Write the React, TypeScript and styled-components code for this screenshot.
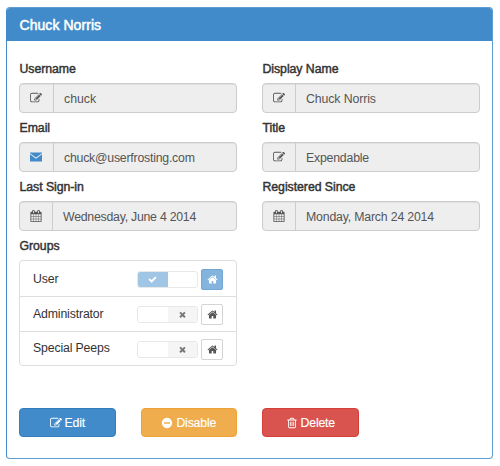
import React from "react";
import styled, { createGlobalStyle, css } from "styled-components";

const Global = createGlobalStyle`
  * { box-sizing: border-box; }
  body {
    margin: 0;
    background: #fff;
    color: #333;
    font-family: "Liberation Sans", Arial, sans-serif;
    font-size: 12.3px;
    line-height: 17px;
  }
`;

const icons = {
  edit: "M888 1184l116-116-152-152-116 116v56h96v96h56zm440-720q-16-16-33 1l-350 350q-17 17-1 33t33-1l350-350q17-17 1-33zm80 594v190q0 119-84.5 203.5t-203.5 84.5h-832q-119 0-203.5-84.5t-84.5-203.5v-832q0-119 84.5-203.5t203.5-84.5h832q63 0 117 25 15 7 18 23 3 17-9 29l-49 49q-14 14-32 8-23-6-45-6h-832q-66 0-113 47t-47 113v832q0 66 47 113t113 47h832q66 0 113-47t47-113v-126q0-13 9-22l64-64q15-15 35-7t20 29zm-96-738l288 288-672 672h-288v-288zm444 132l-92 92-288-288 92-92q28-28 68-28t68 28l152 152q28 28 28 68t-28 68z",
  calendar:
    "M192 1664h288v-288h-288v288zm352 0h320v-288h-320v288zm-352-352h288v-320h-288v320zm352 0h320v-320h-320v320zm-352-384h288v-288h-288v288zm736 736h320v-288h-320v288zm-384-736h320v-288h-320v288zm768 736h288v-288h-288v288zm-384-352h320v-320h-320v320zm-352-864v-288q0-13-9.5-22.5t-22.5-9.5h-64q-13 0-22.5 9.5t-9.5 22.5v288q0 13 9.5 22.5t22.5 9.5h64q13 0 22.5-9.5t9.5-22.5zm736 864h288v-320h-288v320zm-384-384h320v-288h-320v288zm384 0h288v-288h-288v288zm32-480v-288q0-13-9.5-22.5t-22.5-9.5h-64q-13 0-22.5 9.5t-9.5 22.5v288q0 13 9.5 22.5t22.5 9.5h64q13 0 22.5-9.5t9.5-22.5zm384-64v1280q0 52-38 90t-90 38h-1408q-52 0-90-38t-38-90v-1280q0-52 38-90t90-38h128v-96q0-66 47-113t113-47h64q66 0 113 47t47 113v96h384v-96q0-66 47-113t113-47h64q66 0 113 47t47 113v96h128q52 0 90 38t38 90z",
  mail: "M0 240H1792V320L896 960L0 320ZM0 500L896 1140L1792 500V1580H0Z",
  home: "M1472 992v480q0 26-19 45t-45 19h-384v-384h-256v384h-384q-26 0-45-19t-19-45v-480q0-1 .5-3t.5-3l575-474 575 474q1 2 1 6zm223-69l-62 74q-8 9-21 11h-3q-13 0-21-7l-692-577-692 577q-12 8-24 7-13-2-21-11l-62-74q-8-10-7-23.5t11-21.5l719-599q32-26 76-26t76 26l244 204v-195q0-14 9-23t23-9h192q14 0 23 9t9 23v408l219 182q10 8 11 21.5t-7 23.5z",
  check:
    "M1671 566q0 40-28 68l-724 724-136 136q-28 28-68 28t-68-28l-136-136-362-362q-28-28-28-68t28-68l136-136q28-28 68-28t68 28l294 295 656-657q28-28 68-28t68 28l136 136q28 28 28 68z",
  times:
    "M1490 1322q0 40-28 68l-136 136q-28 28-68 28t-68-28l-294-294-294 294q-28 28-68 28t-68-28l-136-136q-28-28-28-68t28-68l294-294-294-294q-28-28-28-68t28-68l136-136q28-28 68-28t68 28l294 294 294-294q28-28 68-28t68 28l136 136q28 28 28 68t-28 68l-294 294 294 294q28 28 28 68z",
  minus:
    "M1344 960v-128q0-26-19-45t-45-19h-768q-26 0-45 19t-19 45v128q0 26 19 45t45 19h768q26 0 45-19t19-45zm320-64q0 209-103 385.5t-279.5 279.5-385.5 103-385.5-103-279.5-279.5-103-385.5 103-385.5 279.5-279.5 385.5-103 385.5 103 279.5 279.5 103 385.5z",
  trash:
    "M704 736v576q0 14-9 23t-23 9h-64q-14 0-23-9t-9-23v-576q0-14 9-23t23-9h64q14 0 23 9t9 23zm256 0v576q0 14-9 23t-23 9h-64q-14 0-23-9t-9-23v-576q0-14 9-23t23-9h64q14 0 23 9t9 23zm256 0v576q0 14-9 23t-23 9h-64q-14 0-23-9t-9-23v-576q0-14 9-23t23-9h64q14 0 23 9t9 23zm128 724v-948h-896v948q0 22 7 40.5t14.5 27 10.5 8.5h832q3 0 10.5-8.5t14.5-27 7-40.5zm-672-1076h448l-48-117q-7-9-17-11h-317q-10 2-17 11zm928 32v64q0 14-9 23t-23 9h-96v948q0 83-47 143.5t-113 60.5h-832q-66 0-113-58.5t-47-141.5v-952h-96q-14 0-23-9t-9-23v-64q0-14 9-23t23-9h309l70-167q15-37 54-63t79-26h320q40 0 79 26t54 63l70 167h309q14 0 23 9t9 23z",
};
type IconName = keyof typeof icons;

const Svg = styled.svg<{ $size: number }>`
  width: ${(p) => p.$size}px;
  height: ${(p) => p.$size}px;
  flex: none;
  fill: currentColor;
`;

const Icon = ({ name, size }: { name: IconName; size: number }) => (
  <Svg $size={size} viewBox="0 0 1792 1792" aria-hidden="true">
    <path d={icons[name]} />
  </Svg>
);

const Panel = styled.section`
  width: 487px;
  height: 452px;
  margin: 7px 0 0 6px;
  border: 1px solid #5c9dd3;
  border-left-color: #428bca;
  border-radius: 4px;
  overflow: hidden;
`;

const Heading = styled.h1`
  height: 33px;
  margin: 0;
  padding: 0 12.5px;
  background: #428bca;
  color: #fff;
  font-size: 14px;
  font-weight: 400;
  line-height: 34px;
  letter-spacing: 0.06px;
  -webkit-text-stroke: 0.5px currentColor;
`;

const Body = styled.div`
  padding: 19px 13px 0 12px;
`;

const Fields = styled.div`
  display: grid;
  grid-template-columns: 218px 217.5px;
  column-gap: 25px;
`;

const Field = styled.div`
  height: 59px;
`;

const Label = styled.div`
  height: 23px;
  padding: 1px 0 0 0.5px;
  line-height: 17px;
  font-size: 12.3px;
  letter-spacing: -0.05px;
  -webkit-text-stroke: 0.45px currentColor;
`;

const InputGroup = styled.div`
  display: flex;
  height: 30px;
  border: 1px solid #ccc;
  border-radius: 4px;
  background: #eee;
  color: #555;
  box-shadow: inset 0 1px 1px rgba(0, 0, 0, 0.06);
`;

const Addon = styled.div<{ $narrow?: boolean; $blue?: boolean }>`
  display: flex;
  align-items: center;
  justify-content: center;
  width: ${(p) => (p.$narrow ? 33 : 34)}px;
  padding-right: ${(p) => (p.$narrow ? 0 : 1)}px;
  border-right: 1px solid #ccc;
  color: ${(p) => (p.$blue ? "#428bca" : "#555")};
`;

const Value = styled.div<{ $spacing: number }>`
  padding-left: 10px;
  line-height: 30px;
  letter-spacing: ${(p) => p.$spacing}px;
  white-space: nowrap;
`;

const GroupList = styled.div`
  width: 218px;
  border: 1px solid #ddd;
  border-radius: 4px;
`;

const GroupRow = styled.div`
  display: flex;
  align-items: center;
  height: 35px;
  padding: 2px 13px 0;
  & + & {
    border-top: 1px solid #ddd;
    padding-top: 1px;
  }
  &:last-child {
    height: 34px;
  }
`;

const GroupName = styled.span`
  flex: 1;
  padding-bottom: 1px;
  letter-spacing: -0.15px;
`;

const Switch = styled.div`
  display: flex;
  width: 61px;
  height: 17px;
  margin-right: 3px;
  border: 1px solid #e8e8e8;
  border-radius: 3px;
  overflow: hidden;
`;

const SwitchHalf = styled.div<{ $tone?: "on" | "off" }>`
  display: flex;
  flex: 1;
  align-items: center;
  justify-content: center;
  ${(p) => p.$tone === "on" && css`background: #a1c5e5; color: #fff;`}
  ${(p) => p.$tone === "off" && css`background: #f5f5f5; color: #777;`}
`;

const HomeButton = styled.button<{ $active: boolean }>`
  display: flex;
  align-items: center;
  justify-content: center;
  width: 22px;
  height: 21px;
  padding: 0;
  border: 1px solid ${(p) => (p.$active ? "#72a7d5" : "#d4d4d4")};
  border-radius: 2px;
  background: ${(p) => (p.$active ? "#84b3dd" : "#fff")};
  color: ${(p) => (p.$active ? "#fff" : "#555")};
`;

const Actions = styled.div`
  display: flex;
  gap: 25px;
  margin-top: 42px;
`;

const Action = styled.button<{ $bg: string; $border: string }>`
  display: flex;
  align-items: center;
  justify-content: center;
  gap: 3px;
  width: 96.5px;
  height: 29px;
  padding: 1px 0 0;
  border: 1px solid ${(p) => p.$border};
  border-radius: 4px;
  background: ${(p) => p.$bg};
  color: #fff;
  font: 12.3px/17px "Liberation Sans", Arial, sans-serif;
  letter-spacing: -0.2px;
  -webkit-text-stroke: 0.15px currentColor;
`;

const fields: { label: string; value: string; icon: IconName; spacing: number }[] = [
  { label: "Username", value: "chuck", icon: "edit", spacing: 0 },
  { label: "Display Name", value: "Chuck Norris", icon: "edit", spacing: -0.1 },
  { label: "Email", value: "chuck@userfrosting.com", icon: "mail", spacing: -0.22 },
  { label: "Title", value: "Expendable", icon: "edit", spacing: -0.2 },
  { label: "Last Sign-in", value: "Wednesday, June 4 2014", icon: "calendar", spacing: -0.24 },
  { label: "Registered Since", value: "Monday, March 24 2014", icon: "calendar", spacing: -0.18 },
];

const groups = [
  { name: "User", member: true },
  { name: "Administrator", member: false },
  { name: "Special Peeps", member: false },
];

export default function App() {
  return (
    <>
      <Global />
      <Panel>
        <Heading>Chuck Norris</Heading>
        <Body>
          <Fields>
            {fields.map((f, i) => (
              <Field key={f.label}>
                <Label>{f.label}</Label>
                <InputGroup>
                  <Addon $narrow={f.icon === "calendar" || i % 2 === 1} $blue={f.icon === "mail"}>
                    <Icon name={f.icon} size={12} />
                  </Addon>
                  <Value $spacing={f.spacing}>{f.value}</Value>
                </InputGroup>
              </Field>
            ))}
          </Fields>
          <Label>Groups</Label>
          <GroupList>
            {groups.map((g) => (
              <GroupRow key={g.name}>
                <GroupName>{g.name}</GroupName>
                <Switch>
                  <SwitchHalf $tone={g.member ? "on" : undefined}>
                    {g.member && <Icon name="check" size={9} />}
                  </SwitchHalf>
                  <SwitchHalf $tone={g.member ? undefined : "off"}>
                    {!g.member && <Icon name="times" size={9} />}
                  </SwitchHalf>
                </Switch>
                <HomeButton $active={g.member} aria-label="Primary group">
                  <Icon name="home" size={11} />
                </HomeButton>
              </GroupRow>
            ))}
          </GroupList>
          <Actions>
            <Action $bg="#428bca" $border="#357ebd">
              <Icon name="edit" size={12} />
              Edit
            </Action>
            <Action $bg="#f0ad4e" $border="#eea236">
              <Icon name="minus" size={12} />
              Disable
            </Action>
            <Action $bg="#d9534f" $border="#d43f3a">
              <Icon name="trash" size={12} />
              Delete
            </Action>
          </Actions>
        </Body>
      </Panel>
    </>
  );
}
